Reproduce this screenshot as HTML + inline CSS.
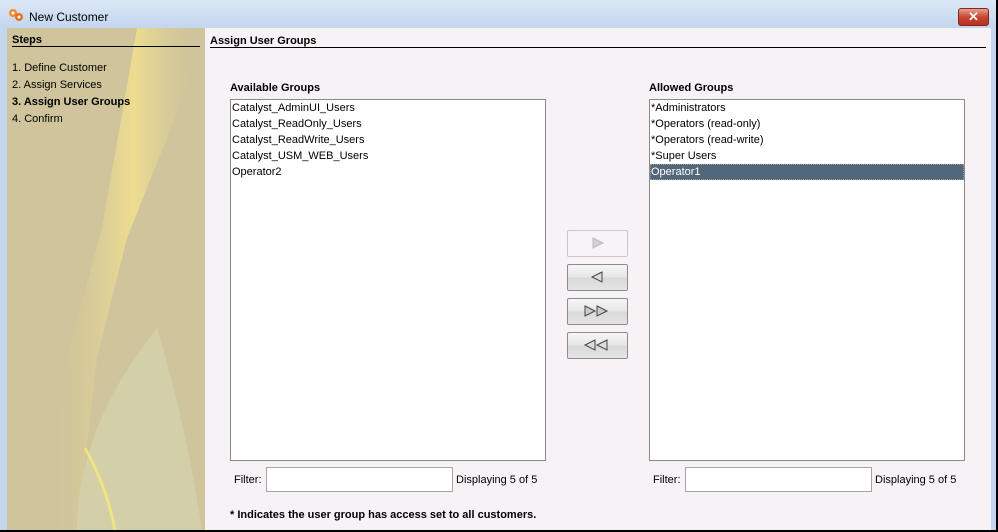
<!DOCTYPE html>
<html><head><style>
*{margin:0;padding:0;box-sizing:border-box}
body{width:998px;height:532px;overflow:hidden;font-family:"Liberation Sans",sans-serif;font-size:11px;color:#000;position:relative;background:#c3d6ee}
.a{position:absolute;white-space:nowrap}
.title{position:absolute;left:0;top:0;width:998px;height:28px;background:linear-gradient(#dbe8f7,#c3d6ee)}
.side{position:absolute;left:7px;top:28px;width:198px;height:502px;background:#cfc49c;overflow:hidden}
.main{position:absolute;left:205px;top:28px;width:786px;height:502px;background:#f6f2f6}
.list{position:absolute;background:#fff;border:1px solid #8a8a8a;width:316px;height:362px;top:99px}
.list div{height:16px;line-height:17px;padding-left:1px}
.btn{position:absolute;left:567px;width:61px;height:27px;border:1px solid #8d8d8d;border-radius:2px;background:linear-gradient(#f6f6f6,#e6e6e6 50%,#d8d8d8 51%,#e4e4e4)}
.inp{position:absolute;top:467px;width:187px;height:25px;background:#fff;border:1px solid #a5a5a5}
</style></head><body>
<div class="title"></div>
<svg class="a" style="left:8px;top:8px" width="16" height="14"><circle cx="5" cy="5" r="4" fill="#f08a30"/><circle cx="5" cy="5" r="1.5" fill="#fff"/><circle cx="11" cy="9" r="4" fill="#e87020"/><circle cx="11" cy="9" r="1.5" fill="#fff"/></svg>
<div class="a" style="left:29px;top:10px;font-size:12px">New Customer</div>
<div class="a" style="left:958px;top:8px;width:31px;height:18px;border:1px solid #7a2a20;border-radius:3px;background:linear-gradient(#e8a08e,#c9452f 50%,#b8321e);color:#fff;font-weight:bold;font-size:13px;text-align:center;line-height:15px">✕</div>
<div class="side">
<svg width="198" height="502" style="position:absolute;left:0;top:0">
<defs><linearGradient id="g" x1="0" y1="0" x2="1" y2="0"><stop offset="0" stop-color="#cfc49c" stop-opacity="0"/><stop offset="0.55" stop-color="#fbe88a"/><stop offset="1" stop-color="#cfc49c" stop-opacity="0"/></linearGradient></defs>
<polygon points="130,0 198,0 198,10 160,110 120,210 90,330 70,502 40,502 60,330 95,200" fill="url(#g)" opacity="0.7"/>
<path d="M150,300 Q180,400 195,502 L70,502 Q70,400 150,300Z" fill="#d8d9b4" opacity="0.5"/>
<path d="M78,420 Q100,460 108,502" stroke="#f7ea78" stroke-width="3" fill="none" opacity="0.8"/>
</svg>
<div class="a" style="left:5px;top:6px;font-weight:bold">Steps</div>
<div class="a" style="left:5px;top:18px;width:188px;height:1px;background:#000"></div>
<div class="a" style="left:5px;top:34px">1. Define Customer</div>
<div class="a" style="left:5px;top:51px">2. Assign Services</div>
<div class="a" style="left:5px;top:68px;font-weight:bold">3. Assign User Groups</div>
<div class="a" style="left:5px;top:85px">4. Confirm</div>
</div>
<div class="main"></div>
<div class="a" style="left:210px;top:35px;font-weight:bold">Assign User Groups</div>
<div class="a" style="left:210px;top:47px;width:776px;height:1px;background:#000"></div>
<div class="a" style="left:230px;top:82px;font-weight:bold">Available Groups</div>
<div class="a" style="left:649px;top:82px;font-weight:bold">Allowed Groups</div>
<div class="list" style="left:230px"><div>Catalyst_AdminUI_Users</div><div>Catalyst_ReadOnly_Users</div><div>Catalyst_ReadWrite_Users</div><div>Catalyst_USM_WEB_Users</div><div>Operator2</div></div>
<div class="list" style="left:649px"><div>*Administrators</div><div>*Operators (read-only)</div><div>*Operators (read-write)</div><div>*Super Users</div><div style="background:#52677a;color:#fff;outline:1px dotted #999;outline-offset:-1px">Operator1</div></div>
<div class="btn" style="top:230px;background:#f6f4f6;border-color:#c8c8c8"></div>
<svg class="a" style="left:591px;top:237px" width="14" height="12"><polygon points="2,1 12,6 2,11" fill="#d0d0d0" stroke="#bbb"/></svg>
<div class="btn" style="top:264px"></div>
<svg class="a" style="left:590px;top:271px" width="14" height="12"><polygon points="12,1 2,6 12,11" fill="#ddd" stroke="#444"/></svg>
<div class="btn" style="top:298px"></div>
<svg class="a" style="left:583px;top:305px" width="28" height="12"><polygon points="2,1 12,6 2,11" fill="#ccc" stroke="#444"/><polygon points="14,1 24,6 14,11" fill="#ccc" stroke="#444"/></svg>
<div class="btn" style="top:332px"></div>
<svg class="a" style="left:583px;top:339px" width="28" height="12"><polygon points="12,1 2,6 12,11" fill="#ddd" stroke="#444"/><polygon points="24,1 14,6 24,11" fill="#ddd" stroke="#444"/></svg>
<div class="a" style="left:234px;top:474px">Filter:</div>
<div class="inp" style="left:266px"></div>
<div class="a" style="left:456px;top:474px">Displaying 5 of 5</div>
<div class="a" style="left:653px;top:474px">Filter:</div>
<div class="inp" style="left:685px"></div>
<div class="a" style="left:875px;top:474px">Displaying 5 of 5</div>
<div class="a" style="left:230px;top:509px;font-weight:bold">* Indicates the user group has access set to all customers.</div>
<div class="a" style="left:0;top:530px;width:998px;height:2px;background:#000"></div>
<div class="a" style="left:996px;top:0;width:2px;height:532px;background:#000"></div>
</body></html>
